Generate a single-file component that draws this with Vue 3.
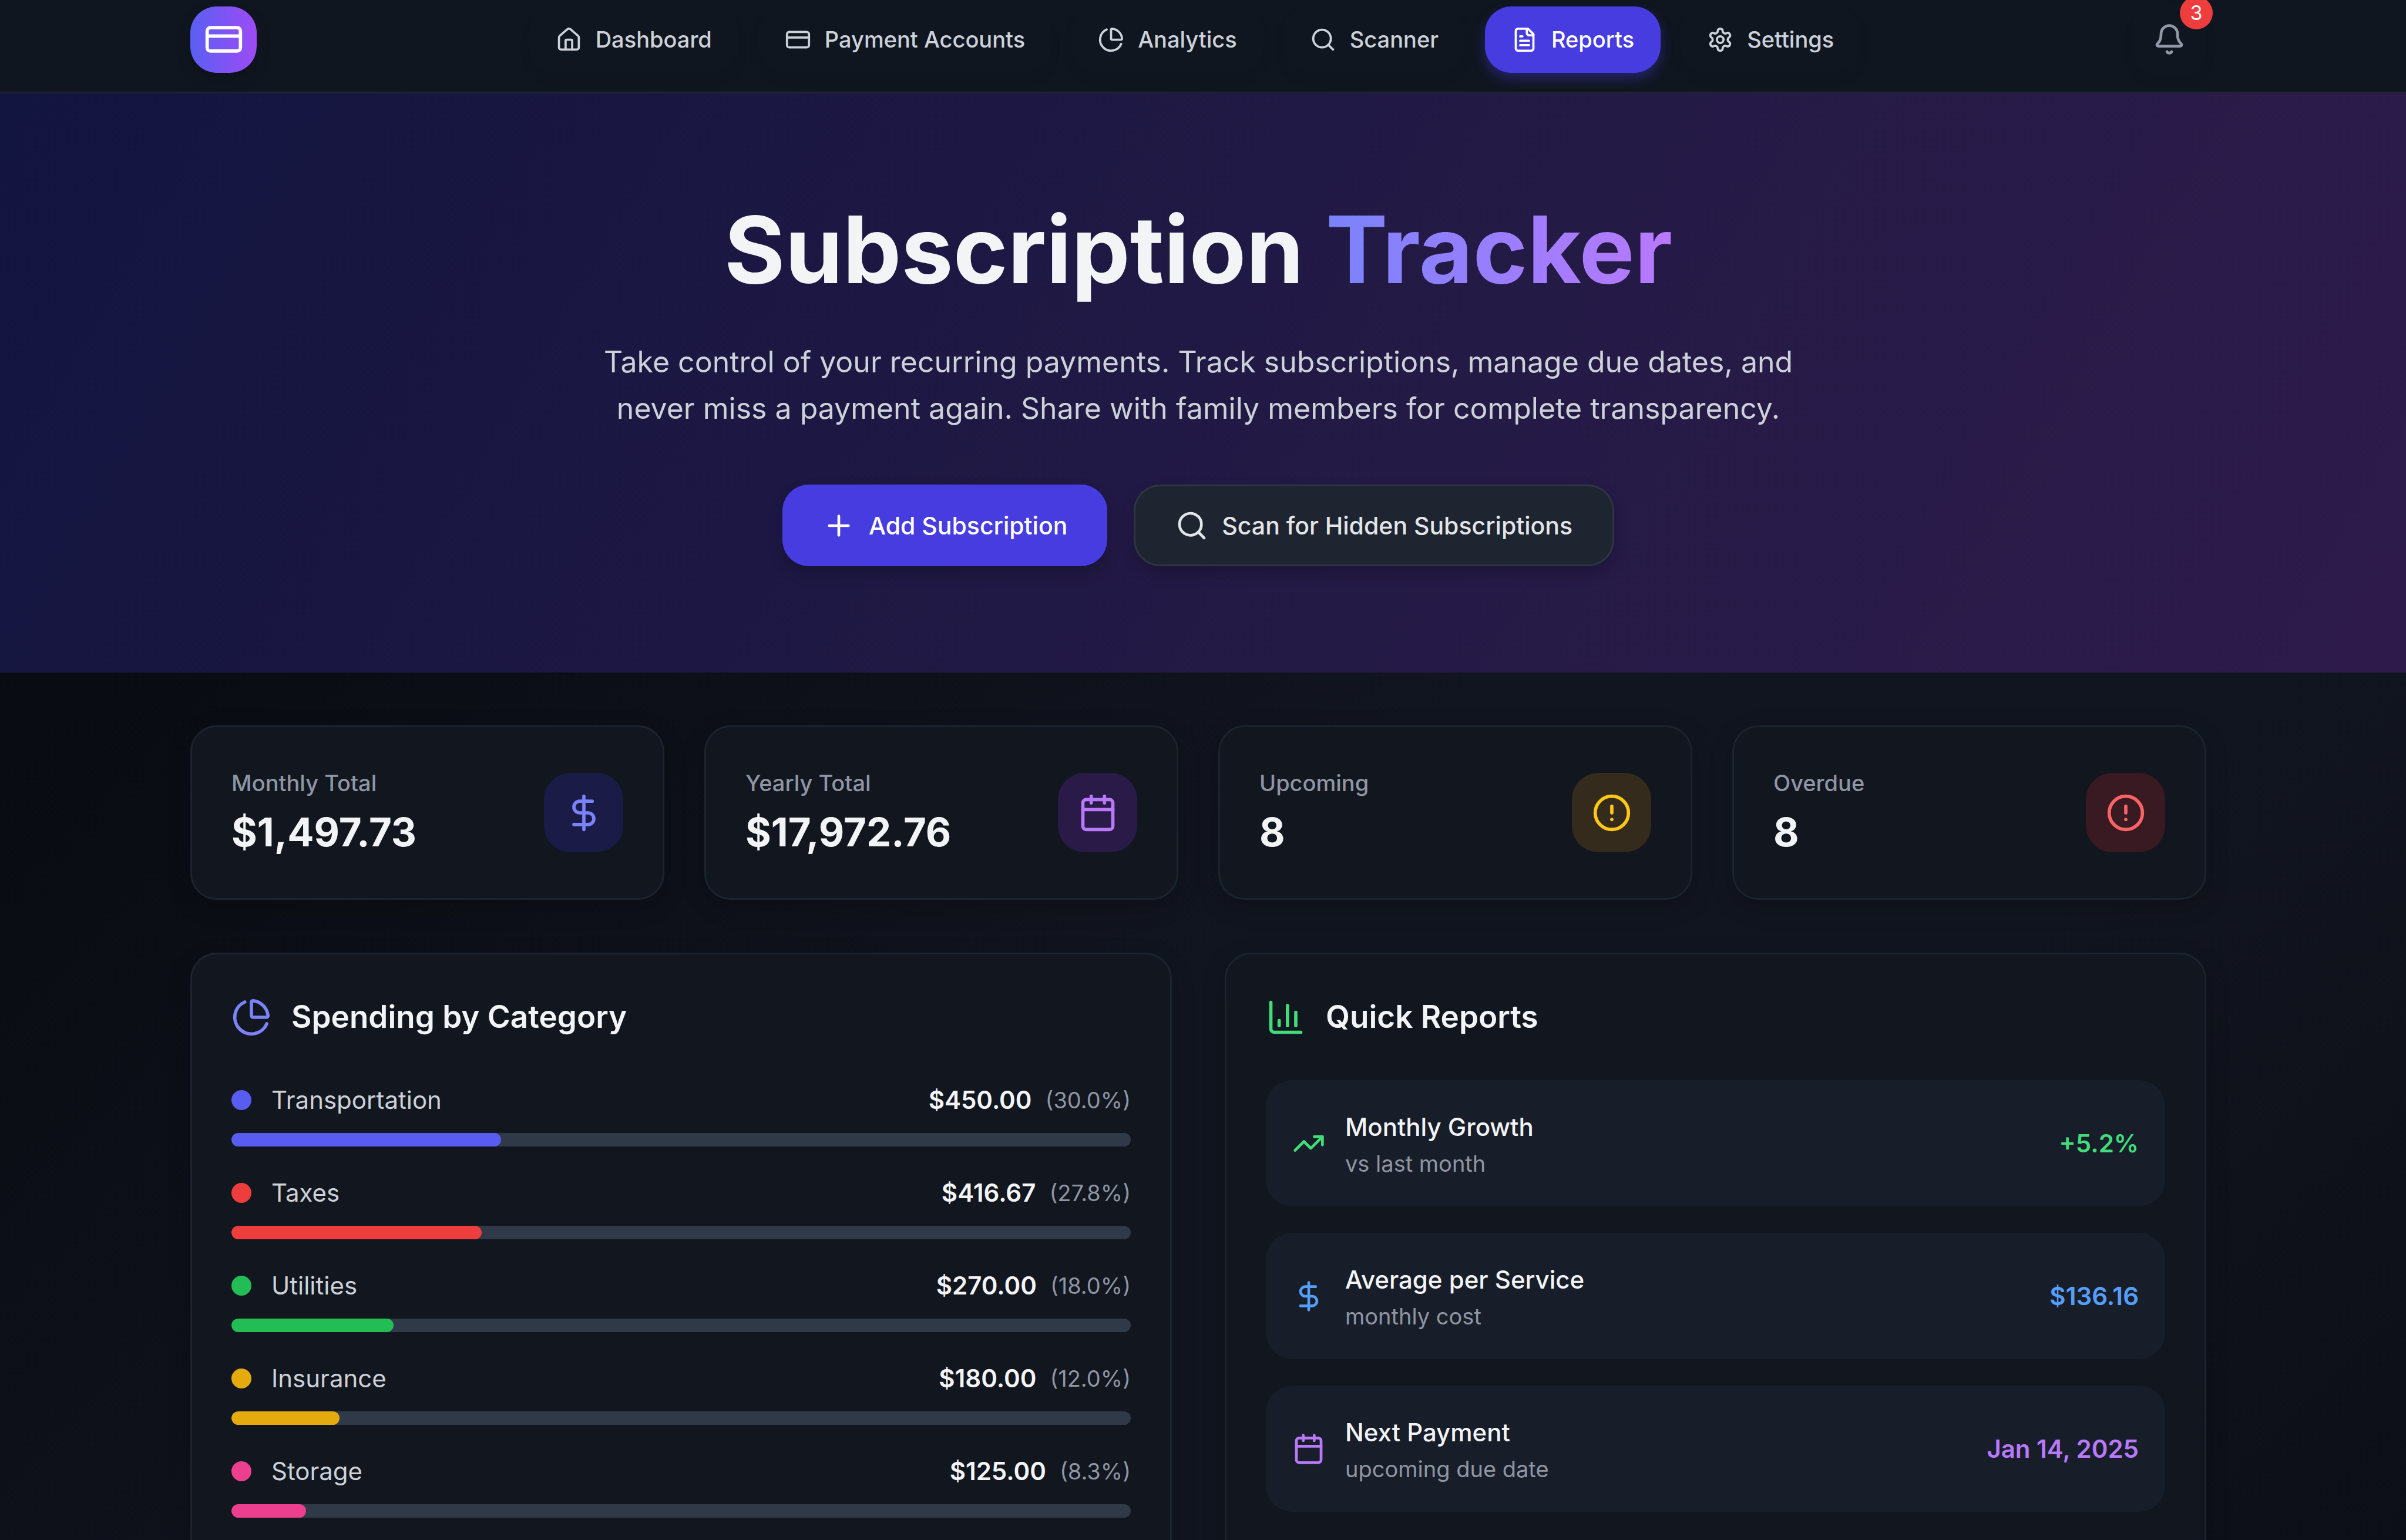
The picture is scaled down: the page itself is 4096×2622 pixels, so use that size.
<script setup>
import { h } from 'vue'

const shapes = {
  card: [['rect', { x: 2, y: 5, width: 20, height: 14, rx: 2 }], ['path', { d: 'M2 10h20' }]],
  home: [
    ['path', { d: 'M15 21v-8a1 1 0 0 0-1-1h-4a1 1 0 0 0-1 1v8' }],
    ['path', { d: 'M3 10a2 2 0 0 1 .709-1.528l7-5.999a2 2 0 0 1 2.582 0l7 5.999A2 2 0 0 1 21 10v9a2 2 0 0 1-2 2H5a2 2 0 0 1-2-2z' }],
  ],
  pie: [
    ['path', { d: 'M21 12c.552 0 1.005-.449.95-.998a10 10 0 0 0-8.953-8.951c-.55-.055-.998.398-.998.95v8a1 1 0 0 0 1 1z' }],
    ['path', { d: 'M21.21 15.89A10 10 0 1 1 8 2.83' }],
  ],
  search: [['circle', { cx: 11, cy: 11, r: 8 }], ['path', { d: 'm21 21-4.3-4.3' }]],
  file: [
    ['path', { d: 'M15 2H6a2 2 0 0 0-2 2v16a2 2 0 0 0 2 2h12a2 2 0 0 0 2-2V7Z' }],
    ['path', { d: 'M14 2v4a2 2 0 0 0 2 2h4' }],
    ['path', { d: 'M10 9H8' }],
    ['path', { d: 'M16 13H8' }],
    ['path', { d: 'M16 17H8' }],
  ],
  gear: [
    ['path', { d: 'M12.22 2h-.44a2 2 0 0 0-2 2v.18a2 2 0 0 1-1 1.73l-.43.25a2 2 0 0 1-2 0l-.15-.08a2 2 0 0 0-2.73.73l-.22.38a2 2 0 0 0 .73 2.73l.15.1a2 2 0 0 1 1 1.72v.51a2 2 0 0 1-1 1.74l-.15.09a2 2 0 0 0-.73 2.73l.22.38a2 2 0 0 0 2.73.73l.15-.08a2 2 0 0 1 2 0l.43.25a2 2 0 0 1 1 1.73V20a2 2 0 0 0 2 2h.44a2 2 0 0 0 2-2v-.18a2 2 0 0 1 1-1.73l.43-.25a2 2 0 0 1 2 0l.15.08a2 2 0 0 0 2.73-.73l.22-.39a2 2 0 0 0-.73-2.73l-.15-.08a2 2 0 0 1-1-1.74v-.5a2 2 0 0 1 1-1.74l.15-.09a2 2 0 0 0 .73-2.73l-.22-.38a2 2 0 0 0-2.73-.73l-.15.08a2 2 0 0 1-2 0l-.43-.25a2 2 0 0 1-1-1.73V4a2 2 0 0 0-2-2z' }],
    ['circle', { cx: 12, cy: 12, r: 3 }],
  ],
  bell: [
    ['path', { d: 'M10.268 21a2 2 0 0 0 3.464 0' }],
    ['path', { d: 'M3.262 15.326A1 1 0 0 0 4 17h16a1 1 0 0 0 .74-1.673C19.41 13.956 18 12.499 18 8A6 6 0 0 0 6 8c0 4.499-1.411 5.956-2.738 7.326' }],
  ],
  plus: [['path', { d: 'M5 12h14' }], ['path', { d: 'M12 5v14' }]],
  dollar: [['path', { d: 'M12 2v20' }], ['path', { d: 'M17 5H9.5a3.5 3.5 0 0 0 0 7h5a3.5 3.5 0 0 1 0 7H6' }]],
  calendar: [
    ['path', { d: 'M8 2v4' }],
    ['path', { d: 'M16 2v4' }],
    ['rect', { x: 3, y: 4, width: 18, height: 18, rx: 2 }],
    ['path', { d: 'M3 10h18' }],
  ],
  alert: [['circle', { cx: 12, cy: 12, r: 10 }], ['path', { d: 'M12 8v4' }], ['path', { d: 'M12 16h.01' }]],
  chart: [
    ['path', { d: 'M3 3v16a2 2 0 0 0 2 2h16' }],
    ['path', { d: 'M18 17V9' }],
    ['path', { d: 'M13 17V5' }],
    ['path', { d: 'M8 17v-3' }],
  ],
  trend: [['path', { d: 'M22 7l-8.5 8.5-5-5L2 17' }], ['path', { d: 'M16 7h6v6' }]],
}

const Icon = (props) =>
  h(
    'svg',
    {
      viewBox: '0 0 24 24',
      fill: 'none',
      stroke: 'currentColor',
      'stroke-width': 2,
      'stroke-linecap': 'round',
      'stroke-linejoin': 'round',
      'aria-hidden': 'true',
    },
    shapes[props.name].map(([tag, attrs]) => h(tag, attrs)),
  )
Icon.props = ['name']

const links = [
  { label: 'Dashboard', icon: 'home' },
  { label: 'Payment Accounts', icon: 'card' },
  { label: 'Analytics', icon: 'pie' },
  { label: 'Scanner', icon: 'search' },
  { label: 'Reports', icon: 'file', active: true },
  { label: 'Settings', icon: 'gear' },
]

const stats = [
  { label: 'Monthly Total', value: '$1,497.73', icon: 'dollar', tone: 'indigo' },
  { label: 'Yearly Total', value: '$17,972.76', icon: 'calendar', tone: 'purple' },
  { label: 'Upcoming', value: '8', icon: 'alert', tone: 'yellow' },
  { label: 'Overdue', value: '8', icon: 'alert', tone: 'red' },
]

const categories = [
  { name: 'Transportation', amount: '$450.00', share: 30.0, color: '#585cf0' },
  { name: 'Taxes', amount: '$416.67', share: 27.8, color: '#ee3d3d' },
  { name: 'Utilities', amount: '$270.00', share: 18.0, color: '#22bd55' },
  { name: 'Insurance', amount: '$180.00', share: 12.0, color: '#e5aa0d' },
  { name: 'Storage', amount: '$125.00', share: 8.3, color: '#ec3f8f' },
]

const reports = [
  { title: 'Monthly Growth', note: 'vs last month', value: '+5.2%', icon: 'trend', tone: 'green' },
  { title: 'Average per Service', note: 'monthly cost', value: '$136.16', icon: 'dollar', tone: 'blue' },
  { title: 'Next Payment', note: 'upcoming due date', value: 'Jan 14, 2025', icon: 'calendar', tone: 'purple' },
]
</script>

<template>
  <div class="page">
    <header class="topbar">
      <div class="container bar">
        <a href="#" class="logo" aria-label="Subscription Tracker"><Icon name="card" /></a>
        <nav class="nav">
          <a v-for="l in links" :key="l.label" href="#" class="link" :class="{ active: l.active }">
            <Icon :name="l.icon" />{{ l.label }}
          </a>
        </nav>
        <button class="bell" type="button" aria-label="Notifications">
          <Icon name="bell" /><span class="badge">3</span>
        </button>
      </div>
    </header>

    <section class="hero">
      <h1>Subscription <span class="accent">Tracker</span></h1>
      <p class="lead">
        Take control of your recurring payments. Track subscriptions, manage due dates, and<br />
        never miss a payment again. Share with family members for complete transparency.
      </p>
      <div class="actions">
        <button class="btn primary" type="button"><Icon name="plus" />Add Subscription</button>
        <button class="btn ghost" type="button"><Icon name="search" />Scan for Hidden Subscriptions</button>
      </div>
    </section>

    <main class="container main">
      <section class="stats">
        <article v-for="s in stats" :key="s.label" class="panel stat">
          <div>
            <p class="stat-label">{{ s.label }}</p>
            <p class="stat-value">{{ s.value }}</p>
          </div>
          <span class="tile" :class="s.tone"><Icon :name="s.icon" /></span>
        </article>
      </section>

      <section class="columns">
        <article class="panel">
          <h2><Icon name="pie" class="indigo-text" />Spending by Category</h2>
          <ul class="categories">
            <li v-for="c in categories" :key="c.name">
              <div class="row">
                <span class="dot" :style="{ background: c.color }"></span>
                <span class="name">{{ c.name }}</span>
                <span class="amount">{{ c.amount }}</span>
                <span class="share">({{ c.share.toFixed(1) }}%)</span>
              </div>
              <div class="track">
                <div class="fill" :style="{ width: c.share + '%', background: c.color }"></div>
              </div>
            </li>
          </ul>
        </article>

        <article class="panel">
          <h2><Icon name="chart" class="green-text" />Quick Reports</h2>
          <ul class="reports">
            <li v-for="r in reports" :key="r.title" class="report">
              <Icon :name="r.icon" :class="r.tone + '-text'" />
              <div class="report-body">
                <p class="report-title">{{ r.title }}</p>
                <p class="report-note">{{ r.note }}</p>
              </div>
              <span class="report-value" :class="r.tone + '-text'">{{ r.value }}</span>
            </li>
          </ul>
        </article>
      </section>
    </main>
  </div>
</template>

<style>
body {
  background: #0b0d15;
}
</style>

<style scoped>
.page {
  height: 100vh;
  overflow: hidden;
  background: linear-gradient(135deg, #07090f 0%, #0b0d15 25%, #11151f 55%, #11151f 75%, #0c0f17 100%);
  color: #f3f4f6;
  font-family: Inter, 'Liberation Sans', sans-serif;
  font-size: 42px;
  line-height: 68px;
}
h1, h2, p, ul {
  margin: 0;
  padding: 0;
}
ul {
  list-style: none;
}
button {
  font: inherit;
  color: inherit;
  border: 0;
  cursor: pointer;
}
a {
  color: inherit;
  text-decoration: none;
}
svg {
  display: block;
  flex: none;
}
.container {
  box-sizing: border-box;
  max-width: 3628px;
  margin: 0 auto;
  padding: 0 106px 0 90px;
}

/* Top bar */
.topbar {
  background: #101620;
  border-bottom: 3px solid #1d2530;
}
.container.bar {
  display: flex;
  align-items: center;
  justify-content: space-between;
  height: 156px;
  padding-bottom: 22px;
}
.logo {
  display: grid;
  place-items: center;
  width: 113px;
  height: 113px;
  border-radius: 45px;
  background: linear-gradient(90deg, #5b5ff3, #9d4bf5);
  box-shadow: 0 12px 24px #0003;
  color: #fff;
}
.logo svg {
  width: 68px;
  height: 68px;
}
.nav {
  display: flex;
  gap: 34px;
}
.link {
  display: flex;
  align-items: center;
  gap: 23px;
  height: 113px;
  padding: 0 45px;
  border-radius: 45px;
  color: #cdd1d8;
  font-size: 38px;
  font-weight: 500;
  box-shadow: 0 12px 20px #0000000f;
}
.link svg {
  width: 45px;
  height: 45px;
}
.link.active {
  background: #463ce0;
  color: #fff;
  box-shadow: 0 11px 20px #463ce059;
}
.bell {
  position: relative;
  width: 125px;
  height: 125px;
  padding: 34px;
  border-radius: 45px;
  background: none;
  color: #9298a6;
  box-shadow: 0 12px 20px #0000000f;
}
.bell svg {
  width: 56px;
  height: 56px;
}
.badge {
  position: absolute;
  top: -11px;
  right: -11px;
  width: 56px;
  height: 56px;
  border-radius: 50%;
  background: #ee3d3d;
  color: #fff;
  font-size: 34px;
  line-height: 56px;
  text-align: center;
}

/* Hero */
.hero {
  padding: 181px 106px 181px 90px;
  background: linear-gradient(120deg, #121540 0%, #1d1843 38%, #241a46 60%, #2e1b4b 100%);
  text-align: center;
}
h1 {
  margin-bottom: 68px;
  font-size: 158px;
  line-height: 169px;
  font-weight: 700;
}
.accent {
  background: linear-gradient(90deg, #7a83fb, #b979fd);
  -webkit-background-clip: text;
  background-clip: text;
  color: transparent;
}
.lead {
  margin-bottom: 90px;
  color: #cdd1d8;
  font-size: 50px;
  line-height: 79px;
}
.actions {
  display: flex;
  justify-content: center;
  gap: 45px;
}
.btn {
  display: flex;
  align-items: center;
  gap: 23px;
  box-sizing: border-box;
  height: 139px;
  padding: 0 68px;
  border-radius: 45px;
  font-size: 41px;
  font-weight: 500;
  box-shadow: 0 12px 24px #0003;
}
.btn svg {
  width: 56px;
  height: 56px;
}
.primary {
  background: #463ce0;
  color: #fff;
}
.ghost {
  border: 3px solid #2b3642;
  background: #1e2530;
  color: #e3e5e9;
}

/* Cards */
.main {
  padding-top: 90px;
}
.panel {
  box-sizing: border-box;
  padding: 67px;
  border: 3px solid #1b232e;
  border-radius: 45px;
  background: #11161f;
  box-shadow: 0 12px 40px #0003;
}
.stats {
  display: grid;
  grid-template-columns: repeat(4, 1fr);
  gap: 68px;
  margin-bottom: 90px;
}
.stat {
  display: flex;
  align-items: center;
  justify-content: space-between;
  height: 297px;
}
.stat-label {
  margin-bottom: 11px;
  color: #8f95a3;
  font-size: 38px;
  line-height: 56px;
  font-weight: 500;
}
.stat-value {
  font-size: 67px;
  line-height: 90px;
  font-weight: 700;
}
.tile {
  display: grid;
  place-items: center;
  width: 135px;
  height: 135px;
  border-radius: 45px;
}
.tile svg {
  width: 68px;
  height: 68px;
}
.indigo { background: #1a1c47; color: #7a83fb; }
.purple { background: #291a48; color: #b979fd; }
.yellow { background: #352b1c; color: #fcc717; }
.red { background: #391a23; color: #fb6466; }
.indigo-text { color: #7a83fb; }
.green-text { color: #42dc7b; }
.blue-text { color: #559ffa; }
.purple-text { color: #b979fd; }
.columns {
  display: grid;
  grid-template-columns: repeat(2, 1fr);
  gap: 90px;
}
.columns .panel {
  min-height: 1120px;
}
h2 {
  display: flex;
  align-items: center;
  gap: 34px;
  margin-bottom: 68px;
  font-size: 53px;
  line-height: 79px;
  font-weight: 600;
}
h2 svg {
  width: 68px;
  height: 68px;
}
.categories {
  display: grid;
  gap: 45px;
}
.row {
  display: flex;
  align-items: center;
  margin-bottom: 22px;
}
.dot {
  width: 34px;
  height: 34px;
  margin-right: 34px;
  border-radius: 50%;
}
.name {
  flex: 1;
  color: #cdd1d8;
}
.amount {
  font-weight: 600;
}
.share {
  margin-left: 23px;
  color: #8f95a3;
  font-size: 38px;
}
.track {
  height: 23px;
  border-radius: 12px;
  background: #303947;
  overflow: hidden;
}
.fill {
  height: 100%;
  border-radius: 12px;
}
.reports {
  display: grid;
  gap: 45px;
}
.report {
  display: flex;
  align-items: center;
  gap: 34px;
  box-sizing: border-box;
  height: 215px;
  padding: 0 45px;
  border-radius: 45px;
  background: #181e29;
}
.report svg {
  width: 56px;
  height: 56px;
}
.report-body {
  flex: 1;
}
.report-title {
  font-weight: 500;
}
.report-note {
  color: #8f95a3;
  font-size: 38px;
  line-height: 56px;
}
.report-value {
  font-weight: 600;
}
</style>
